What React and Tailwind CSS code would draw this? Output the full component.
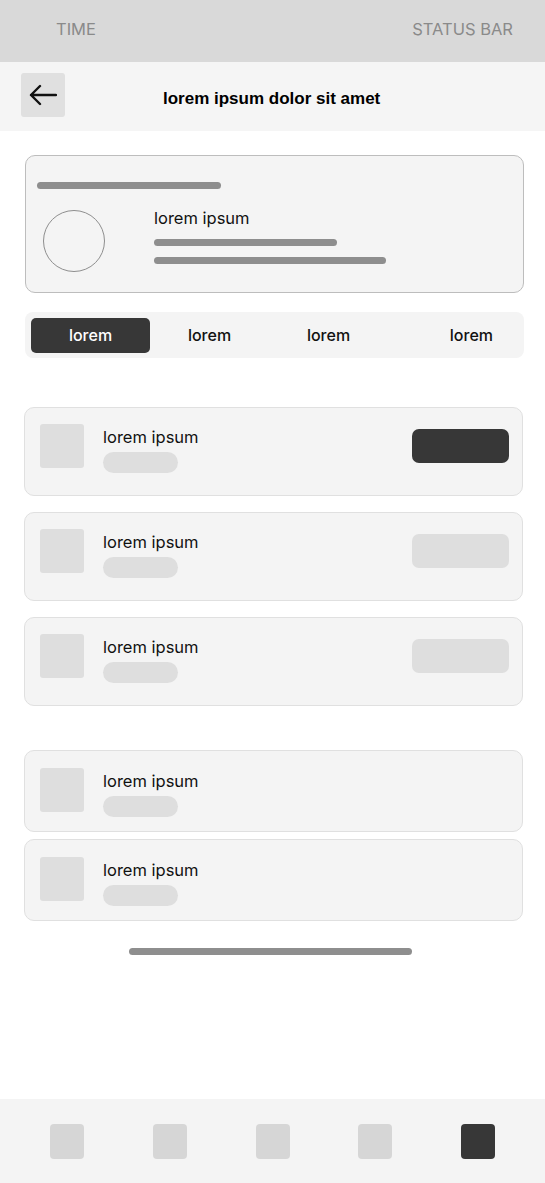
const items = [
  { id: 1, active: true },
  { id: 2, active: false },
  { id: 3, active: false },
];

const Row = ({ action, active, tall }) => (
  <div
    className={`mr-[1px] flex items-start rounded-[10px] border border-[#e0e0e0] bg-[#f4f4f4] pl-[15px] pr-[13px] ${
      tall ? "h-[89px] pt-[16px]" : "h-[82px] pt-[17px]"
    }`}
  >
    <div className="h-[44px] w-[44px] shrink-0 rounded-[3px] bg-[#dedede]" />
    <div className="ml-[19px] mt-[3px] flex flex-col">
      <span className="text-[16.5px] leading-5 text-[#111]">lorem ipsum</span>
      <div className="mt-[5px] h-[21px] w-[75px] rounded-full bg-[#dedede]" />
    </div>
    {action && (
      <div
        className={`ml-auto mt-[5px] h-[34px] w-[97px] rounded-[7px] ${
          active ? "bg-[#373737]" : "bg-[#dedede]"
        }`}
      />
    )}
  </div>
);

export default function App() {
  return (
    <div
      className="flex min-h-screen flex-col bg-white"
      style={{ fontFamily: "Inter, 'Noto Sans', sans-serif" }}
    >
      {/* status bar */}
      <div className="flex h-[62px] items-center justify-between bg-[#d9d9d9] pb-[3px] pl-[56px] pr-[32px] text-[16.5px] text-[#8a8a8a]">
        <span>TIME</span>
        <span>STATUS BAR</span>
      </div>

      {/* header */}
      <div className="flex h-[69px] items-start bg-[#f5f5f5] pl-[21px] pt-[11px]">
        <button className="flex h-[44px] w-[44px] items-center justify-center rounded-[3px] bg-[#e0e0e0]">
          <svg width="28" height="22" viewBox="0 0 28 22" fill="none">
            <path
              d="M27 11H2M11 2L2 11L11 20"
              stroke="#111"
              strokeWidth="2.4"
              strokeLinecap="round"
              strokeLinejoin="round"
            />
          </svg>
        </button>
        <h1
          className="ml-[98px] mt-[14px] text-[17px] font-bold leading-6 text-black"
          style={{ fontFamily: "'Liberation Sans', Arial, sans-serif" }}
        >
          lorem ipsum dolor sit amet
        </h1>
      </div>

      <main className="pl-[24px] pr-[21px]">
        {/* profile card */}
        <div className="ml-[1px] mt-[24px] h-[138px] rounded-[10px] border border-[#bdbdbd] bg-[#f4f4f4] px-[11px] pt-[26px]">
          <div className="h-[7px] w-[184px] rounded-full bg-[#8e8e8e]" />
          <div className="mt-[21px] flex items-start">
            <div className="ml-[6px] h-[62px] w-[62px] rounded-full border border-[#8e8e8e]" />
            <div className="ml-[49px] -mt-[2px] flex flex-col">
              <span className="text-[16.5px] leading-5 text-[#111]">lorem ipsum</span>
              <div className="mt-[11px] h-[7px] w-[183px] rounded-full bg-[#8e8e8e]" />
              <div className="mt-[11px] h-[7px] w-[232px] rounded-full bg-[#8e8e8e]" />
            </div>
          </div>
        </div>

        {/* tabs */}
        <div className="ml-[1px] mt-[19px] flex h-[46px] items-center rounded-lg bg-[#f4f4f4] px-[6px] text-base font-medium text-[#111]">
          <span className="flex h-[35px] w-[119px] items-center justify-center rounded-[5px] bg-[#373737] text-white">
            lorem
          </span>
          <span className="w-[119px] text-center">lorem</span>
          <span className="w-[119px] text-center">lorem</span>
          <span className="ml-auto mr-[25px]">lorem</span>
        </div>

        {/* list */}
        <div className="mt-[49px] flex flex-col gap-4">
          {items.map((it) => (
            <Row key={it.id} action active={it.active} tall />
          ))}
        </div>

        <div className="mt-[44px] flex flex-col gap-[7px]">
          <Row />
          <Row />
        </div>

        <div className="ml-[105px] mt-[27px] h-[7px] w-[283px] rounded-full bg-[#8e8e8e]" />
      </main>

      {/* bottom nav */}
      <nav className="mt-auto flex h-[84px] items-center justify-between bg-[#f4f4f4] px-[50px]">
        <div className="h-[35px] w-[34px] rounded-[4px] bg-[#d6d6d6]" />
        <div className="h-[35px] w-[34px] rounded-[4px] bg-[#d6d6d6]" />
        <div className="h-[35px] w-[34px] rounded-[4px] bg-[#d6d6d6]" />
        <div className="h-[35px] w-[34px] rounded-[4px] bg-[#d6d6d6]" />
        <div className="h-[35px] w-[34px] rounded-[4px] bg-[#373737]" />
      </nav>
    </div>
  );
}
